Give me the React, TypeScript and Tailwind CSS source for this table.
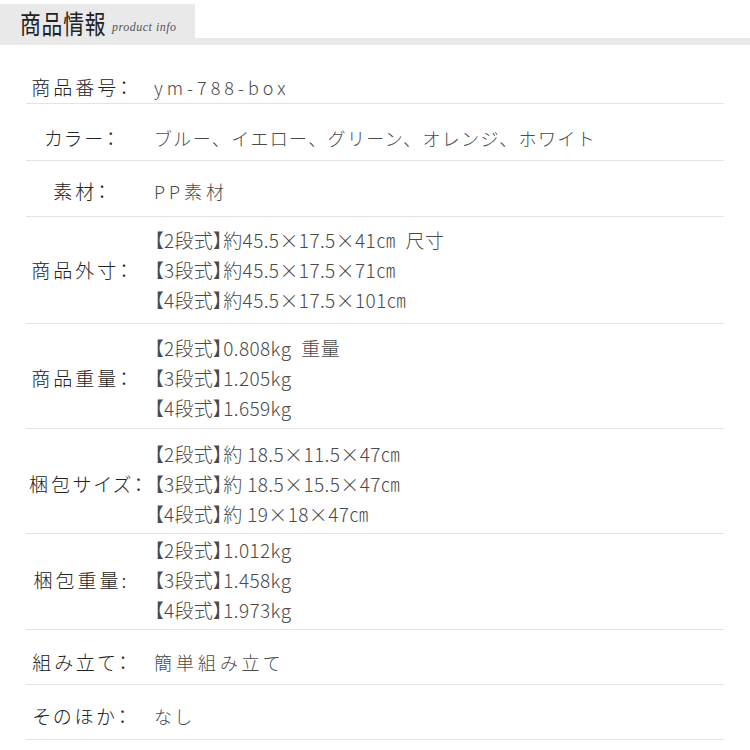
import React from "react";

const JP = "font-['Noto_Sans_CJK_JP','Noto_Sans',sans-serif]";

type Row = {
  label: string;
  value: string[];
  h: string;
  pad: string;
  single?: "wide" | "mid" | "none";
};

const rows: Row[] = [
  { label: "商品番号：", value: ["ym-788-box"], h: "h-[59px]", pad: "pt-[25px]", single: "wide" },
  { label: "カラー：", value: ["ブルー、イエロー、グリーン、オレンジ、ホワイト"], h: "h-[57px]", pad: "pt-[11px]", single: "mid" },
  { label: "素材：", value: ["PP素材"], h: "h-[56px]", pad: "pt-[5px]", single: "wide" },
  {
    label: "商品外寸：",
    value: ["【2段式】約45.5×17.5×41㎝\u2002尺寸", "【3段式】約45.5×17.5×71㎝", "【4段式】約45.5×17.5×101㎝"],
    h: "h-[107px]",
    pad: "pt-[0px]",
  },
  {
    label: "商品重量：",
    value: ["【2段式】0.808kg\u2002重量", "【3段式】1.205kg", "【4段式】1.659kg"],
    h: "h-[105px]",
    pad: "pt-[3px]",
  },
  {
    label: "梱包サイズ：",
    value: ["【2段式】約 18.5×11.5×47㎝", "【3段式】約 18.5×15.5×47㎝", "【4段式】約 19×18×47㎝"],
    h: "h-[105px]",
    pad: "pt-[6px]",
  },
  {
    label: "梱包重量:",
    value: ["【2段式】1.012kg", "【3段式】1.458kg", "【4段式】1.973kg"],
    h: "h-[96px]",
    pad: "pb-[3px]",
  },
  { label: "組み立て：", value: ["簡単組み立て"], h: "h-[55px]", pad: "pt-[9px]", single: "wide" },
  { label: "そのほか：", value: ["なし"], h: "h-[55px]", pad: "pt-[7px]", single: "wide" },
];

export default function App() {
  return (
    <div className={`w-[750px] h-[750px] bg-white ${JP} overflow-hidden`}>
      {/* header */}
      <div className="pt-[4px] flex flex-col">
        <div className="flex items-end w-[195px] h-[34px] bg-[#e9e9e9]">
          <span className="ml-[20px] -mb-[1px] inline-block origin-left scale-x-[0.8] text-[26px] leading-[32px] text-[#222] font-normal tracking-[1px] whitespace-nowrap">
            商品情報
          </span>
          <span className="-ml-[16px] mb-[5px] font-['Liberation_Serif',serif] italic text-[12px] leading-none text-[#555] tracking-[0.5px] whitespace-nowrap">
            product info
          </span>
        </div>
        <div className="h-[7px] w-full bg-[#e9e9e9]" />
      </div>

      {/* table */}
      <div className="mx-[26px] flex flex-col">
        {rows.map((r, i) => (
          <div
            key={i}
            className={`flex items-center border-b border-[#e3e3e3] ${r.h} ${r.pad}`}
          >
            <div className="w-[108px] shrink-0 text-center text-[19px] leading-[30px] tracking-[3px] text-[#222] font-light whitespace-nowrap [font-feature-settings:'palt'] pl-[3px]">
              {r.label}
            </div>
            <div
              className={`ml-[20px] flex flex-col text-[#4a4a4a] font-light whitespace-nowrap ${
                r.single === "wide"
                  ? "text-[18px] leading-[30px] tracking-[4px] [font-feature-settings:'palt']"
                  : r.single === "mid"
                  ? "text-[18px] leading-[30px] tracking-[1.35px]"
                  : "text-[19px] leading-[30px] tracking-[0.4px] [font-feature-settings:'palt']"
              }`}
            >
              {r.value.map((v, j) => (
                <div key={j}>{v}</div>
              ))}
            </div>
          </div>
        ))}
      </div>
    </div>
  );
}
